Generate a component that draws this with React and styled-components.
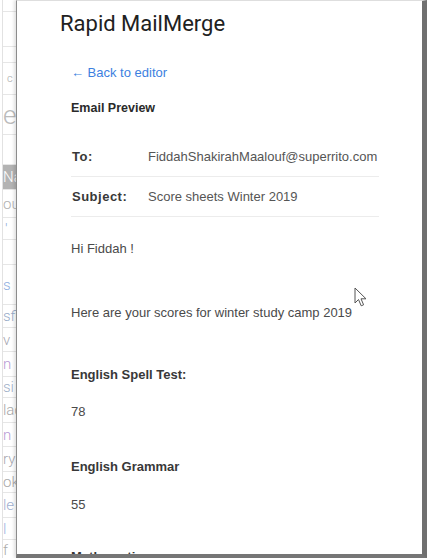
import * as React from 'react';
import styled, { createGlobalStyle } from 'styled-components';

const GlobalStyle = createGlobalStyle`
  html, body {
    margin: 0;
    padding: 0;
    background: #fff;
    overflow: hidden;
  }
`;

const Frame = styled.div`
  display: flex;
  width: 427px;
  height: 558px;
  overflow: hidden;
`;

const Sheet = styled.div`
  width: 16px;
  flex-shrink: 0;
  overflow: hidden;
  background: #fff;
`;

const SheetColumn = styled.div`
  margin-left: 2px;
  border-left: 1px solid #e2e2e2;
  display: flex;
  flex-direction: column;
`;

const Cell = styled.div`
  height: ${p => p.$h}px;
  flex-shrink: 0;
  box-sizing: border-box;
  border-bottom: 1px solid #e6e6e6;
  background: ${p => p.$bg || 'transparent'};
  color: ${p => p.$color || '#b5b5b5'};
  font-family: Roboto, 'Liberation Sans', sans-serif;
  font-weight: 300;
  font-size: ${p => p.$size || 15}px;
  white-space: nowrap;
  overflow: hidden;
  display: flex;
  align-items: center;
  padding-left: ${p => p.$indent || 0}px;
`;

const Panel = styled.div`
  position: relative;
  flex: 1;
  box-sizing: border-box;
  height: 558px;
  background: #fff;
  border-top: 1px solid #dedede;
  border-left: 1px solid #8c8c8c;
  border-right: 5px solid #707070;
  border-bottom: 4px solid #767676;
  box-shadow: -2px 0 3px rgba(0, 0, 0, 0.12);
  overflow: hidden;
  padding-top: 9px;
`;

const Title = styled.h1`
  margin: 0;
  padding-left: 43px;
  font-family: Roboto, 'Liberation Sans', sans-serif;
  font-weight: 400;
  font-size: 22px;
  line-height: 28px;
  color: #212121;
`;

const Content = styled.div`
  padding: 0 43px 0 54px;
  font-family: 'Liberation Sans', Arial, sans-serif;
  font-size: 13px;
  line-height: 16px;
  color: #444;
`;

const BackLink = styled.a`
  display: block;
  margin-top: 27px;
  color: #3d7fe0;
  text-decoration: none;
  cursor: pointer;
`;

const SectionTitle = styled.div`
  margin-top: 19px;
  font-weight: 700;
  font-size: 12.5px;
  color: #2a2a2a;
`;

const Fields = styled.div`
  margin-top: 21px;
`;

const FieldRow = styled.div`
  display: grid;
  grid-template-columns: 77px 1fr;
  align-items: center;
  height: 40px;
  box-sizing: border-box;
  border-bottom: 1px solid #ececec;
`;

const FieldLabel = styled.span`
  font-weight: 700;
  letter-spacing: 0.5px;
  color: #383838;
  padding-left: 1px;
`;

const FieldValue = styled.span`
  color: #555;
  white-space: nowrap;
`;

const Line = styled.div`
  margin-top: ${p => p.$gap}px;
  font-weight: ${p => (p.$bold ? 700 : 400)};
  color: ${p => (p.$bold ? '#383838' : '#4a4a4a')};
`;

const Cursor = styled.svg`
  position: absolute;
  left: 337px;
  top: 286px;
  width: 14px;
  height: 21px;
`;

const sheetCells = [
  { h: 12 },
  { h: 35 },
  { h: 16 },
  { h: 32, t: 'c', size: 11, indent: 4, color: '#aaa' },
  { h: 40, t: 'e', size: 26, color: '#bbb' },
  { h: 30 },
  { h: 25, t: 'Na', bg: '#b3b3b3', color: '#fff', indent: 0 },
  { h: 28, t: 'ou', color: '#b0b0b0' },
  { h: 22, t: "'", color: '#8aa8d8', indent: 2 },
  { h: 25 },
  { h: 40, t: 's', color: '#8eaee0' },
  { h: 23, t: 'sfie', color: '#98acc8' },
  { h: 24, t: 'v', color: '#a5a5b0' },
  { h: 25, t: 'n', color: '#b79ad4' },
  { h: 21, t: 'si', color: '#9fb0c8' },
  { h: 25, t: 'lac', color: '#a8a8a8' },
  { h: 24, t: 'n', color: '#b79ad4' },
  { h: 25, t: 'ry', color: '#a8a8b0' },
  { h: 21, t: 'ok', color: '#a8a8a8' },
  { h: 25, t: 'le', color: '#9fb0d0' },
  { h: 22, t: 'l', color: '#a0b4e0' },
  { h: 20, t: 'f', color: '#aaa' },
];

export default function App() {
  return (
    <>
      <GlobalStyle />
      <Frame>
        <Sheet>
          <SheetColumn>
            {sheetCells.map((c, i) => (
              <Cell key={i} $h={c.h} $bg={c.bg} $color={c.color} $size={c.size} $indent={c.indent}>
                {c.t}
              </Cell>
            ))}
          </SheetColumn>
        </Sheet>
        <Panel>
          <Title>Rapid MailMerge</Title>
          <Content>
            <BackLink>← Back to editor</BackLink>
            <SectionTitle>Email Preview</SectionTitle>
            <Fields>
              <FieldRow>
                <FieldLabel>To:</FieldLabel>
                <FieldValue>FiddahShakirahMaalouf@superrito.com</FieldValue>
              </FieldRow>
              <FieldRow>
                <FieldLabel>Subject:</FieldLabel>
                <FieldValue>Score sheets Winter 2019</FieldValue>
              </FieldRow>
            </Fields>
            <Line $gap={24}>Hi Fiddah !</Line>
            <Line $gap={48}>Here are your scores for winter study camp 2019</Line>
            <Line $gap={46} $bold>English Spell Test:</Line>
            <Line $gap={21}>78</Line>
            <Line $gap={39} $bold>English Grammar</Line>
            <Line $gap={22}>55</Line>
            <Line $gap={36} $bold>Mathematics</Line>
          </Content>
          <Cursor viewBox="0 0 14 21">
            <path
              d="M1 1 L1 16 L4.5 12.5 L7.2 18.8 L9.6 17.8 L7 11.8 L12 11.8 Z"
              fill="#fff"
              stroke="#555"
              strokeWidth="1"
              strokeLinejoin="round"
            />
          </Cursor>
        </Panel>
      </Frame>
    </>
  );
}
